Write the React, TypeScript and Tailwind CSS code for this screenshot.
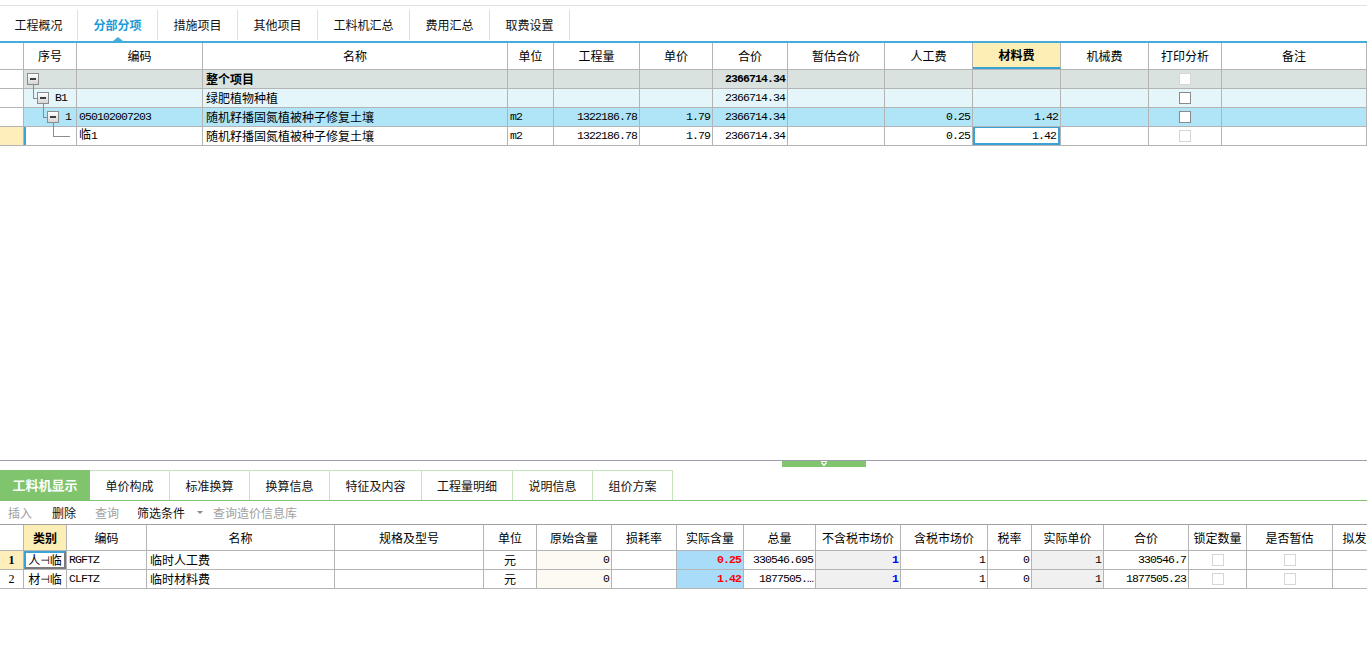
import React from "react";

const CJK = "font-['Noto_Sans_CJK_SC','Noto_Sans',sans-serif]";
const MONO = "font-['Liberation_Mono','Noto_Sans_CJK_SC',monospace] text-[11.5px] tracking-[-0.9px]";

type CellProps = { w: string; className?: string; clip?: boolean; children?: React.ReactNode };
function C({ w, className = "", clip = true, children }: CellProps) {
  return (
    <div
      className={`${w} shrink-0 h-full border-r border-[#b4b4b4] flex items-center whitespace-nowrap relative leading-none ${
        clip ? "overflow-hidden" : ""
      } ${className}`}
    >
      {children}
    </div>
  );
}

function TreeBox() {
  return (
    <div className="w-[12px] h-[12px] border border-[#8c8c8c] bg-linear-to-b from-white to-[#d6d6d6] flex items-center justify-center shrink-0 relative z-10">
      <div className="w-[6px] h-[2px] bg-[#404040]" />
    </div>
  );
}

function Check({ light = false }: { light?: boolean }) {
  return (
    <div
      className={`w-[12px] h-[12px] border bg-white ${light ? "border-[#d6d6d6]" : "border-[#8a8a8a]"}`}
    />
  );
}

const TW = [
  "w-[24px]",
  "w-[53px]",
  "w-[126px]",
  "w-[305px]",
  "w-[46px]",
  "w-[86px]",
  "w-[73px]",
  "w-[75px]",
  "w-[97px]",
  "w-[88px]",
  "w-[88px]",
  "w-[88px]",
  "w-[73px]",
  "w-[145px]",
];
const TH = ["", "序号", "编码", "名称", "单位", "工程量", "单价", "合价", "暂估合价", "人工费", "材料费", "机械费", "打印分析", "备注"];

const BW = [
  "w-[24px]",
  "w-[43px]",
  "w-[80px]",
  "w-[188px]",
  "w-[149px]",
  "w-[53px]",
  "w-[75px]",
  "w-[65px]",
  "w-[67px]",
  "w-[72px]",
  "w-[85px]",
  "w-[87px]",
  "w-[44px]",
  "w-[72px]",
  "w-[85px]",
  "w-[58px]",
  "w-[86px]",
  "w-[56px]",
];
const BH = [
  "",
  "类别",
  "编码",
  "名称",
  "规格及型号",
  "单位",
  "原始含量",
  "损耗率",
  "实际含量",
  "总量",
  "不含税市场价",
  "含税市场价",
  "税率",
  "实际单价",
  "合价",
  "锁定数量",
  "是否暂估",
  "拟发包",
];

const topTabs = [
  { t: "工程概况", w: "w-[78px]" },
  { t: "分部分项", w: "w-[80px]", active: true },
  { t: "措施项目", w: "w-[80px]" },
  { t: "其他项目", w: "w-[80px]" },
  { t: "工料机汇总", w: "w-[92px]" },
  { t: "费用汇总", w: "w-[80px]" },
  { t: "取费设置", w: "w-[80px]" },
];

const bottomTabs = [
  { t: "单价构成", w: "w-[80px]" },
  { t: "标准换算", w: "w-[80px]" },
  { t: "换算信息", w: "w-[80px]" },
  { t: "特征及内容", w: "w-[92px]" },
  { t: "工程量明细", w: "w-[91px]" },
  { t: "说明信息", w: "w-[80px]" },
  { t: "组价方案", w: "w-[80px]" },
];

const R = `justify-end pr-[2px] ${MONO}`;

export default function App() {
  return (
    <div className={`w-[1367px] h-[647px] bg-white overflow-hidden flex flex-col text-black ${CJK}`}>
      {/* top tabs */}
      <div className="h-[5px] shrink-0" />
      <div className="h-px bg-[#e2e2e2] shrink-0" />
      <div className="h-[35px] flex shrink-0">
        {topTabs.map((tab) => (
          <div
            key={tab.t}
            className={`${tab.w} mt-[4px] h-[30px] border-r border-[#e0e0e0] flex items-center justify-center relative text-[12px] ${
              tab.active ? "text-[#1b9bd7] font-bold text-[12.5px]" : "text-[#111]"
            }`}
          >
            {tab.t}
            {tab.active && (
              <div className="absolute -bottom-[1px] left-1/2 -translate-x-1/2 w-0 h-0 border-l-[5px] border-r-[5px] border-b-[4px] border-l-transparent border-r-transparent border-b-[#45acd9]" />
            )}
          </div>
        ))}
      </div>
      <div className="h-[2px] bg-[#45acd9] shrink-0" />

      {/* top table */}
      <div className="flex-1 min-h-0 overflow-hidden">
        <div className="h-[27px] flex border-b border-[#b4b4b4] text-[12px]">
          {TH.map((t, i) => (
            <C
              key={i}
              w={TW[i]}
              className={`justify-center ${i === 10 ? "bg-[#fdeeb5] font-bold border-b-2 border-b-[#3aa3d6]" : ""}`}
            >
              {t}
            </C>
          ))}
        </div>

        {/* row 1 */}
        <div className="h-[19px] flex border-b border-[#b4b4b4] bg-[#d9e2de]">
          <C w={TW[0]} className="bg-white" />
          <C w={TW[1]} className="pl-[3px]" clip={false}>
            <TreeBox />
          </C>
          <C w={TW[2]} />
          <C w={TW[3]} className="pl-[3px] text-[12px] font-bold">
            整个项目
          </C>
          <C w={TW[4]} />
          <C w={TW[5]} />
          <C w={TW[6]} />
          <C w={TW[7]} className={`${R} font-bold`}>
            2366714.34
          </C>
          <C w={TW[8]} />
          <C w={TW[9]} />
          <C w={TW[10]} />
          <C w={TW[11]} />
          <C w={TW[12]} className="justify-center">
            <Check light />
          </C>
          <C w={TW[13]} />
        </div>

        {/* row 2 */}
        <div className="h-[19px] flex border-b border-[#b4b4b4] bg-[#e5f6fb]">
          <C w={TW[0]} className="bg-white" />
          <C w={TW[1]} className="pl-[13px]" clip={false}>
            <span className="absolute left-[9px] -top-[4px] w-px h-[13px] bg-[#8c8c8c]" />
            <span className="absolute left-[9px] top-[9px] w-[4px] h-px bg-[#8c8c8c]" />
            <TreeBox />
            <span className={`ml-[6px] ${MONO}`}>B1</span>
          </C>
          <C w={TW[2]} />
          <C w={TW[3]} className="pl-[3px] text-[12px]">
            绿肥植物种植
          </C>
          <C w={TW[4]} />
          <C w={TW[5]} />
          <C w={TW[6]} />
          <C w={TW[7]} className={R}>
            2366714.34
          </C>
          <C w={TW[8]} />
          <C w={TW[9]} />
          <C w={TW[10]} />
          <C w={TW[11]} />
          <C w={TW[12]} className="justify-center">
            <Check />
          </C>
          <C w={TW[13]} />
        </div>

        {/* row 3 */}
        <div className="h-[19px] flex border-b border-[#b4b4b4] bg-[#b0e5f8]">
          <C w={TW[0]} className="bg-white" />
          <C w={TW[1]} className="pl-[23px]" clip={false}>
            <span className="absolute left-[19px] -top-[4px] w-px h-[13px] bg-[#8c8c8c]" />
            <span className="absolute left-[19px] top-[9px] w-[4px] h-px bg-[#8c8c8c]" />
            <TreeBox />
            <span className={`ml-[6px] ${MONO}`}>1</span>
          </C>
          <C w={TW[2]} className={`pl-[2px] ${MONO}`}>
            050102007203
          </C>
          <C w={TW[3]} className="pl-[3px] text-[12px]">
            随机籽播固氮植被种子修复土壤
          </C>
          <C w={TW[4]} className={`pl-[2px] ${MONO}`}>
            m2
          </C>
          <C w={TW[5]} className={R}>
            1322186.78
          </C>
          <C w={TW[6]} className={R}>
            1.79
          </C>
          <C w={TW[7]} className={R}>
            2366714.34
          </C>
          <C w={TW[8]} />
          <C w={TW[9]} className={R}>
            0.25
          </C>
          <C w={TW[10]} className={R}>
            1.42
          </C>
          <C w={TW[11]} />
          <C w={TW[12]} className="justify-center">
            <Check />
          </C>
          <C w={TW[13]} />
        </div>

        {/* row 4 */}
        <div className="h-[19px] flex border-b border-[#b4b4b4] bg-white">
          <C w={TW[0]} className="bg-[#fdeebb]" />
          <C w={TW[1]} className="border-l-2 border-l-[#3aa3d6]" clip={false}>
            <span className="absolute left-[27px] -top-[4px] w-px h-[13px] bg-[#8c8c8c]" />
            <span className="absolute left-[27px] top-[9px] w-[17px] h-px bg-[#8c8c8c]" />
          </C>
          <C w={TW[2]} className={`pl-[2px] ${MONO}`}>
            <span className="text-[12px] tracking-normal">临</span>1
          </C>
          <C w={TW[3]} className="pl-[3px] text-[12px]">
            随机籽播固氮植被种子修复土壤
          </C>
          <C w={TW[4]} className={`pl-[2px] ${MONO}`}>
            m2
          </C>
          <C w={TW[5]} className={R}>
            1322186.78
          </C>
          <C w={TW[6]} className={R}>
            1.79
          </C>
          <C w={TW[7]} className={R}>
            2366714.34
          </C>
          <C w={TW[8]} />
          <C w={TW[9]} className={R}>
            0.25
          </C>
          <C w={TW[10]} className="">
            <div
              className={`w-full h-[calc(100%+1px)] -mt-px border-2 border-[#3aa3d6] flex items-center justify-end pr-[2px] ${MONO}`}
            >
              1.42
            </div>
          </C>
          <C w={TW[11]} />
          <C w={TW[12]} className="justify-center">
            <Check light />
          </C>
          <C w={TW[13]} />
        </div>
      </div>

      {/* bottom pane */}
      <div className="h-[187px] shrink-0 flex flex-col">
        <div className="h-px bg-[#9d9dad] shrink-0" />
        <div className="h-[9px] shrink-0">
          <div className="ml-[782px] w-[84px] h-[6px] bg-[#80c46e] flex items-center justify-center">
            <svg width="10" height="6" viewBox="0 0 10 6">
              <path d="M2 0.5 H8 M2.5 1.5 L5 4.5 L7.5 1.5" stroke="#ffffff" strokeWidth="1.2" fill="none" />
            </svg>
          </div>
        </div>
        <div className="h-[30px] flex shrink-0">
          <div className="w-[90px] bg-[#80c46e] text-white font-bold text-[13px] flex items-center justify-center">
            工料机显示
          </div>
          {bottomTabs.map((tab) => (
            <div
              key={tab.t}
              className={`${tab.w} border-t border-r border-[#c5e3bc] flex items-center justify-center text-[12px] text-[#111]`}
            >
              {tab.t}
            </div>
          ))}
        </div>
        <div className="h-px bg-[#80c46e] shrink-0" />
        <div className="h-[23px] flex items-center text-[12px] pl-[8px] shrink-0">
          <span className="text-[#a0a0a0]">插入</span>
          <span className="ml-[20px] text-[#111]">删除</span>
          <span className="ml-[19px] text-[#a0a0a0]">查询</span>
          <span className="ml-[18px] text-[#111]">筛选条件</span>
          <span className="ml-[12px] w-0 h-0 border-l-[3px] border-r-[3px] border-t-[3px] border-l-transparent border-r-transparent border-t-[#8a8a8a]" />
          <span className="ml-[10px] text-[#a0a0a0]">查询造价信息库</span>
        </div>

        {/* bottom table */}
        <div className="overflow-hidden">
          <div className="h-[27px] flex border-t border-t-[#a0a0a0] border-b border-b-[#b4b4b4] text-[12px]">
            {BH.map((t, i) => (
              <C key={i} w={BW[i]} className={`justify-center ${i === 1 ? "bg-[#fdeeb5] font-bold" : ""}`}>
                {t}
              </C>
            ))}
          </div>

          {[
            {
              n: "1",
              cat: "人",
              code: "RGFTZ",
              name: "临时人工费",
              act: "0.25",
              total: "330546.695",
              sum: "330546.7",
              first: true,
            },
            {
              n: "2",
              cat: "材",
              code: "CLFTZ",
              name: "临时材料费",
              act: "1.42",
              total: "1877505.…",
              sum: "1877505.23",
              first: false,
            },
          ].map((r) => (
            <div key={r.n} className="h-[19px] flex border-b border-[#b4b4b4] bg-white">
              <C
                w={BW[0]}
                className={`justify-center font-['Liberation_Serif',serif] text-[12px] ${
                  r.first ? "bg-[#fdeebb] font-bold" : ""
                }`}
              >
                {r.n}
              </C>
              <C w={BW[1]} className="">
                <div
                  className={`w-full h-full flex items-center justify-center text-[12px] ${
                    r.first
                      ? "border-2 border-l-[#3aa3d6] border-t-[#3aa3d6] border-r-[#7a7a7a] border-b-[#7a7a7a]"
                      : ""
                  }`}
                >
                  {r.cat}
                  <span className="text-[11px] font-['DejaVu_Sans',sans-serif]">⊣</span>临
                </div>
              </C>
              <C w={BW[2]} className={`pl-[2px] ${MONO}`}>
                {r.code}
              </C>
              <C w={BW[3]} className="pl-[3px] text-[12px]">
                {r.name}
              </C>
              <C w={BW[4]} />
              <C w={BW[5]} className="justify-center text-[12px]">
                元
              </C>
              <C w={BW[6]} className={`${R} bg-[#fdfaf4]`}>
                0
              </C>
              <C w={BW[7]} />
              <C w={BW[8]} className={`${R} bg-[#a8dcf8] text-[#ff0000] font-bold`}>
                {r.act}
              </C>
              <C w={BW[9]} className={R}>
                {r.total}
              </C>
              <C w={BW[10]} className={`${R} bg-[#f0f0f0] text-[#0000ff] font-bold`}>
                1
              </C>
              <C w={BW[11]} className={R}>
                1
              </C>
              <C w={BW[12]} className={R}>
                0
              </C>
              <C w={BW[13]} className={`${R} bg-[#f0f0f0]`}>
                1
              </C>
              <C w={BW[14]} className={R}>
                {r.sum}
              </C>
              <C w={BW[15]} className="justify-center">
                <Check light />
              </C>
              <C w={BW[16]} className="justify-center">
                <Check light />
              </C>
              <C w={BW[17]} />
            </div>
          ))}
        </div>
      </div>
    </div>
  );
}
